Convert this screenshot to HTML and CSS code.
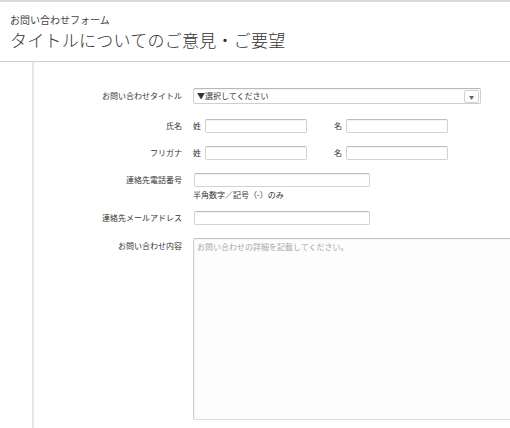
FILE: index.html
```html
<!DOCTYPE html>
<html lang="ja">
<head>
<meta charset="utf-8">
<title>お問い合わせフォーム</title>
<link rel="stylesheet" href="styles.css">
</head>
<body>
<div class="topbar"></div>
<header class="header">
  <div class="subtitle">お問い合わせフォーム</div>
  <h1 class="title">タイトルについてのご意見・ご要望</h1>
</header>
<main class="main">
  <aside class="side"></aside>
  <form class="form">
    <div class="row row-1">
      <label class="label label-16">お問い合わせタイトル</label>
      <div class="select">
        <span class="select-text">▼選択してください</span>
        <span class="select-arrow">▼</span>
      </div>
    </div>
    <div class="row row-2">
      <label class="label">氏名</label>
      <div class="name">
        <span class="pre">姓</span><input class="input name-input" type="text">
        <span class="pre pre-2">名</span><input class="input name-input" type="text">
      </div>
    </div>
    <div class="row row-3">
      <label class="label">フリガナ</label>
      <div class="name">
        <span class="pre">姓</span><input class="input name-input" type="text">
        <span class="pre pre-2">名</span><input class="input name-input" type="text">
      </div>
    </div>
    <div class="row row-4">
      <label class="label">連絡先電話番号</label>
      <div class="field">
        <input class="input wide" type="text">
        <div class="note">半角数字／記号（-）のみ</div>
      </div>
    </div>
    <div class="row row-5">
      <label class="label">連絡先メールアドレス</label>
      <div class="field">
        <input class="input wide" type="text">
      </div>
    </div>
    <div class="row row-6">
      <label class="label label-top">お問い合わせ内容</label>
      <div class="field">
        <textarea class="textarea" placeholder="お問い合わせの詳細を記載してください。"></textarea>
      </div>
    </div>
  </form>
</main>
</body>
</html>
```
FILE: styles.css
```css
html, body {
  margin: 0;
  padding: 0;
  background: #fff;
  overflow: hidden;
}
body {
  font-family: "Noto Sans CJK JP", "Noto Sans", sans-serif;
  color: #333;
  width: 510px;
  height: 428px;
}
.topbar {
  height: 2px;
  background: #dadada;
}
.header {
  padding: 12px 10px 11px;
  border-bottom: 1px solid #cfcfcf;
}
.subtitle {
  font-size: 10px;
  line-height: 12px;
  color: #444;
}
.title {
  margin: 4px 0 0;
  font-size: 17px;
  line-height: 20px;
  font-weight: 300;
  letter-spacing: 0.25px;
  color: #333;
}
.main {
  display: flex;
  height: 366px;
}
.side {
  width: 32px;
  flex: none;
  border-right: 2px solid #e6e6e6;
}
.form {
  flex: 1;
  padding-top: 26px;
  min-width: 0;
}
.row {
  display: grid;
  grid-template-columns: 148px 340px;
  column-gap: 11px;
  align-items: start;
}
.row-2 { margin-top: 15px; }
.row-3 { margin-top: 13px; }
.row-4 { margin-top: 13px; }
.row-5 { margin-top: 11px; }
.row-6 { margin-top: 13px; }
.label {
  text-align: right;
  font-size: 8px;
  line-height: 14px;
  color: #333;
  white-space: nowrap;
}
.label-16 { line-height: 16px; }
.label-top { padding-top: 1px; }
.select {
  width: 288px;
  height: 16px;
  box-sizing: border-box;
  border: 1px solid #cfcfcf;
  border-top-color: #b9b9b9;
  border-radius: 2px;
  box-shadow: inset 0 1px 1px rgba(0,0,0,0.05);
  display: flex;
  align-items: center;
  justify-content: space-between;
  padding: 0 1px 0 3px;
}
.select-text {
  font-size: 8px;
  line-height: 14px;
  color: #333;
}
.select-arrow {
  width: 15px;
  height: 13px;
  box-sizing: border-box;
  border: 1px solid #d2d2d2;
  border-radius: 2px;
  background: #fff;
  font-size: 5px;
  line-height: 11px;
  text-align: center;
  color: #666;
}
.name {
  display: flex;
  align-items: center;
}
.pre {
  font-size: 8px;
  line-height: 14px;
  width: 12px;
  flex: none;
}
.pre-2 {
  margin-left: 27px;
}
.input {
  display: block;
  margin: 0;
  padding: 0 3px;
  height: 14px;
  box-sizing: border-box;
  border: 1px solid #d2d2d2;
  border-top-color: #bcbcbc;
  border-radius: 2px;
  box-shadow: inset 0 1px 1px rgba(0,0,0,0.05);
  background: #fff;
  font-family: inherit;
  font-size: 8px;
  outline: none;
}
.name-input { width: 102px; }
.wide { width: 176px; margin-left: 1px; }
.note {
  margin-top: 3px;
  font-size: 8px;
  line-height: 10px;
  color: #333;
}
.textarea {
  display: block;
  margin: 0;
  width: 340px;
  height: 182px;
  box-sizing: border-box;
  border: 1px solid #dcdcdc;
  border-top-color: #c4c4c4;
  border-left-color: #cfcfcf;
  border-radius: 2px;
  box-shadow: inset 1px 1px 1px rgba(0,0,0,0.04);
  background: #fdfdfd;
  padding: 2px 3px;
  font-family: inherit;
  font-size: 8px;
  line-height: 12px;
  resize: none;
  outline: none;
}
.textarea::placeholder {
  color: #a8a8a8;
}
```
